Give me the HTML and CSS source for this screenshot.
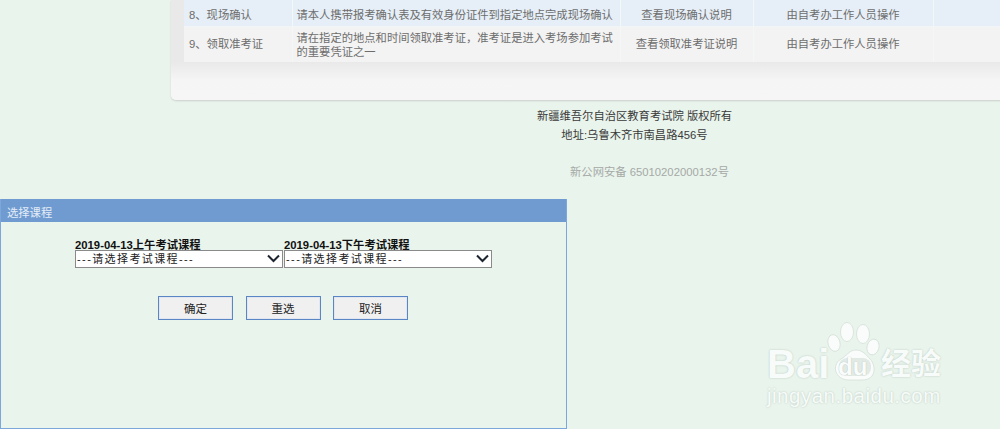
FILE: index.html
```html
<!DOCTYPE html>
<html lang="zh">
<head>
<meta charset="utf-8">
<title>选择课程</title>
<link rel="stylesheet" href="styles.css">
</head>
<body>
<main class="page">
  <section class="panel">
    <table class="steps">
      <colgroup>
        <col class="c1"><col class="c2"><col class="c3"><col class="c4"><col class="c5"><col>
      </colgroup>
      <tr class="row-a">
        <td class="name">8、现场确认</td>
        <td class="desc">请本人携带报考确认表及有效身份证件到指定地点完成现场确认</td>
        <td class="mid">查看现场确认说明</td>
        <td class="mid">由自考办工作人员操作</td>
        <td></td>
      </tr>
      <tr class="row-b">
        <td class="name">9、领取准考证</td>
        <td class="desc desc-long">请在指定的地点和时间领取准考证，准考证是进入考场参加考试的重要凭证之一</td>
        <td class="mid">查看领取准考证说明</td>
        <td class="mid">由自考办工作人员操作</td>
        <td></td>
      </tr>
    </table>
  </section>
  <footer class="foot">
    <p class="foot-line">新疆维吾尔自治区教育考试院 版权所有</p>
    <p class="foot-line">地址:乌鲁木齐市南昌路456号</p>
    <p class="foot-record">新公网安备 65010202000132号</p>
  </footer>
  <section class="dialog">
    <h2 class="dialog-title">选择课程</h2>
    <form class="dialog-body">
      <div class="fields">
        <label class="field">
          <span class="field-label">2019-04-13上午考试课程</span>
          <span class="pick-wrap">
            <select class="pick"><option>---请选择考试课程---</option></select>
            <svg class="chev" width="13" height="9" viewBox="0 0 13 9"><path d="M1 1.5l5.5 5.5 5.5-5.5"/></svg>
          </span>
        </label>
        <label class="field">
          <span class="field-label">2019-04-13下午考试课程</span>
          <span class="pick-wrap">
            <select class="pick"><option>---请选择考试课程---</option></select>
            <svg class="chev" width="13" height="9" viewBox="0 0 13 9"><path d="M1 1.5l5.5 5.5 5.5-5.5"/></svg>
          </span>
        </label>
      </div>
      <div class="actions">
        <button type="button" class="btn">确定</button>
        <button type="button" class="btn">重选</button>
        <button type="button" class="btn">取消</button>
      </div>
    </form>
  </section>
</main>
<div class="mark">
  <svg class="paw" width="60" height="62" viewBox="0 0 60 62">
    <g class="paw-fill">
      <ellipse cx="7" cy="21" rx="6" ry="8.5" transform="rotate(-15 7 21)"/>
      <ellipse cx="20" cy="10" rx="6.5" ry="9.5"/>
      <ellipse cx="36" cy="12" rx="6.5" ry="9.5"/>
      <ellipse cx="46" cy="25" rx="6" ry="8" transform="rotate(15 46 25)"/>
      <path d="M29 28c7 0 10 5 14 9 6 6 7 21-8 21H22C8 58 4 43 14 37c6-3 8-9 15-9z"/>
    </g>
    <rect class="paw-inner" x="12" y="36" width="32" height="18" rx="8"/>
  </svg>
  <div class="mark-brand"><span class="mark-bai">Bai</span><span class="mark-du">du</span><span class="mark-cn">经验</span></div>
  <div class="mark-url">jingyan.baidu.com</div>
</div>
</body>
</html>
```
FILE: styles.css
```css
* { box-sizing: border-box; }
html, body { margin: 0; height: 429px; overflow: hidden; }
body {
  background: #e9f4ec;
  font-family: "Liberation Sans", "Noto Sans CJK SC", sans-serif;
  font-size: 11.3px;
  position: relative;
}
.page { display: flex; flex-direction: column; height: 429px; overflow: hidden; }
.panel {
  margin-left: 171px;
  width: 900px;
  height: 100px;
  flex: none;
  padding-left: 13px;
  border-radius: 0 0 0 5px;
  background: linear-gradient(#e9e9e9 62px, #f6f5f5 80px, #f7f6f6 99px);
  box-shadow: 0 1px 2px #c9cfcb;
}
.steps {
  width: 887px;
  border-collapse: collapse;
  table-layout: fixed;
  color: #6d6d6d;
  line-height: 14px;
}
.c1 { width: 108px; }
.c2 { width: 328px; }
.c3 { width: 133px; }
.c4 { width: 180px; }
.steps td { border-right: 1px solid #f4f7f8; padding: 0 4px; vertical-align: middle; }
.row-a { height: 26px; background: #e6eff7; border-bottom: 1px solid #f2f5f7; }
.row-a td { padding-top: 5px; }
.row-b { height: 36px; background: #f3f3f3; }
.steps .name { padding-left: 5px; }
.steps .desc-long { padding-top: 1px; }
.mid { text-align: center; }
.foot {
  flex: none;
  height: 99px;
  margin-left: 404px;
  width: 461px;
  display: flex;
  flex-direction: column;
  align-items: center;
  color: #3a3a3a;
  padding-top: 6px;
}
.foot-line { margin: 0; line-height: 20px; height: 19px; }
.foot-record { margin: 18px 0 0 30px; color: #a5a9a7; line-height: 20px; }
.dialog {
  flex: 1;
  width: 567px;
  border: 1px solid #7ca7dc;
  border-top: 0;
}
.dialog-title {
  margin: 0;
  height: 23px;
  padding-left: 6px;
  background: #6f9bd1;
  color: #e4edf7;
  font-size: 11.3px;
  font-weight: normal;
  line-height: 29px;
}
.dialog-body { display: flex; flex-direction: column; padding: 15px 0 0 74px; }
.fields { display: flex; gap: 1px; }
.field { display: flex; flex-direction: column; width: 208px; }
.field-label { font-weight: bold; color: #111; height: 13px; line-height: 16px; white-space: nowrap; }
.pick-wrap { position: relative; display: block; height: 18px; }
.pick {
  display: block;
  width: 208px;
  height: 18px;
  padding: 0 0 0 1px;
  appearance: none;
  font-family: "Liberation Sans", "Noto Sans CJK SC", sans-serif;
  font-size: 11px;
  letter-spacing: 1.4px;
  color: #222;
  background: #fff;
  border: 1px solid #8a8a8a;
  border-radius: 0;
}
.chev { position: absolute; right: 3px; top: 4px; fill: none; stroke: #1c2430; stroke-width: 2; pointer-events: none; }
.actions { display: flex; gap: 12.5px; margin: 28px 0 0 83px; }
.btn {
  width: 75px;
  height: 24px;
  padding: 0;
  background: #f0f0f0;
  border: 1px solid #5b86c6;
  border-radius: 0;
  box-shadow: inset 0 0 0 1px #e2e6ee;
  color: #222;
  font-family: "Liberation Sans", "Noto Sans CJK SC", sans-serif;
  font-size: 11.5px;
}
.mark { position: absolute; left: 767px; top: 322px; width: 190px; height: 90px; color: #f7fbf9; }
.paw { position: absolute; left: 60px; top: 0; }
.paw-fill { fill: #fafcfb; stroke: #d3dfd8; stroke-width: 0.8; }
.paw-inner { fill: #e2eae5; }
.mark-brand { position: absolute; left: 0; top: 22px; height: 40px; white-space: nowrap; }
.mark-bai { position: absolute; left: 0; top: 0; font: bold 40px/40px "Liberation Sans", sans-serif; text-shadow: 0 0 2px #b5c5bb; }
.mark-du { position: absolute; left: 71px; top: 11px; font: bold 24px/24px "Liberation Sans", sans-serif; color: #fafcfb; text-shadow: 0 0 1px #a9b8af; }
.mark-cn { position: absolute; left: 114px; top: -1px; font: bold 30px/36px "Noto Sans CJK SC", sans-serif; text-shadow: 0 0 2px #b5c5bb; }
.mark-url { position: absolute; left: 0; top: 62px; font: 20.5px/24px "Liberation Sans", sans-serif; letter-spacing: .5px; text-shadow: 0 0 2px #b5c5bb; }
```
